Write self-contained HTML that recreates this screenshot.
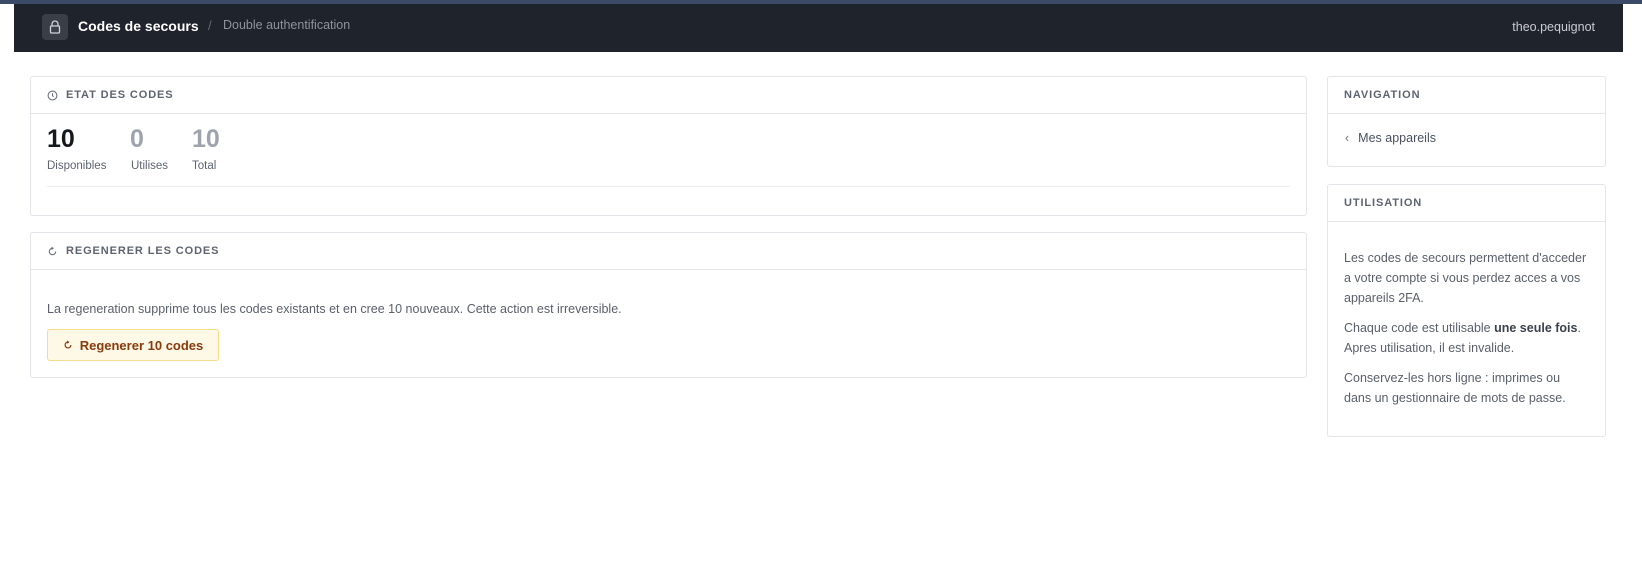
<!DOCTYPE html>
<html><head><meta charset="utf-8"><style>
*{box-sizing:border-box;margin:0;padding:0}
body{width:1642px;height:577px;background:#fff;font-family:"Liberation Sans",Arial,sans-serif;position:relative;overflow:hidden}
.topline{position:absolute;left:0;top:0;width:1642px;height:4px;background:#3b4a66}
.hdr{position:absolute;left:14px;top:4px;width:1609px;height:48px;background:#1f232b}
.lock{position:absolute;left:28px;top:10px;width:26px;height:26px;border-radius:4px;background:#3a3f47}
.title{position:absolute;left:64px;top:14px;color:#fff;font-weight:bold;font-size:14px}
.sep{position:absolute;left:194px;top:14px;color:#666b73;font-size:13px}
.crumb{position:absolute;left:209px;top:14px;color:#8e939b;font-size:12.5px}
.user{position:absolute;right:28px;top:16px;color:#c9ccd1;font-size:12.5px}
.card{position:absolute;border:1px solid #e3e5e8;border-radius:3px;background:#fff}
.ch{height:37px;border-bottom:1px solid #e3e5e8;padding:0 16px;display:flex;align-items:center;font-size:11px;font-weight:bold;letter-spacing:0.9px;color:#5e6470}
.ch svg{margin-right:8px}
.num{position:absolute;font-size:25px;font-weight:bold}
.lbl{position:absolute;font-size:11.5px;color:#5e6470}
.p{font-size:12.5px;color:#5a606b;line-height:20px}
</style></head><body>
<div class="topline"></div>
<div class="hdr">
 <div class="lock"><svg width="26" height="26" viewBox="0 0 26 26"><rect x="8.5" y="12" width="9" height="7" rx="1" fill="none" stroke="#d0d3d8" stroke-width="1.3"/><path d="M10 12V10a3 3 0 0 1 6 0v2" fill="none" stroke="#d0d3d8" stroke-width="1.3"/></svg></div>
 <div class="title">Codes de secours</div>
 <div class="sep">/</div>
 <div class="crumb">Double authentification</div>
 <div class="user">theo.pequignot</div>
</div>

<div class="card" style="left:30px;top:76px;width:1277px;height:140px">
 <div class="ch"><svg width="11" height="11" viewBox="0 0 12 12"><circle cx="6" cy="6" r="4.8" fill="none" stroke="#6b717c" stroke-width="1.2"/><path d="M6 3.5V6.3L7.3 7.3" fill="none" stroke="#6b717c" stroke-width="1.1"/></svg>ETAT DES CODES</div>
 <div class="num" style="left:16px;top:48px;color:#15181d">10</div>
 <div class="num" style="left:99px;top:48px;color:#9ea3ac">0</div>
 <div class="num" style="left:161px;top:48px;color:#9ea3ac">10</div>
 <div class="lbl" style="left:16px;top:83px">Disponibles</div>
 <div class="lbl" style="left:100px;top:83px">Utilises</div>
 <div class="lbl" style="left:161px;top:83px">Total</div>
 <div style="position:absolute;left:16px;right:16px;top:109px;height:1px;background:#eceef0"></div>
</div>

<div class="card" style="left:30px;top:232px;width:1277px;height:146px">
 <div class="ch"><svg width="11" height="11" viewBox="0 0 12 12"><path d="M9.5 6A3.5 3.5 0 1 1 6 2.5" fill="none" stroke="#6b717c" stroke-width="1.2"/><path d="M5 1.2L6.6 2.5 5 3.8" fill="none" stroke="#6b717c" stroke-width="1.1"/></svg>REGENERER LES CODES</div>
 <div class="p" style="position:absolute;left:16px;top:66px">La regeneration supprime tous les codes existants et en cree 10 nouveaux. Cette action est irreversible.</div>
 <div style="position:absolute;left:16px;top:96px;width:172px;height:32px;background:#fef9e6;border:1px solid #f5dd8a;border-radius:3px;display:flex;align-items:center;justify-content:center;color:#8a3a0c;font-weight:bold;font-size:13px;white-space:nowrap"><svg width="10" height="10" viewBox="0 0 12 12" style="margin-right:7px;flex:none"><path d="M9.5 6A3.5 3.5 0 1 1 6 2.5" fill="none" stroke="#8a3a0c" stroke-width="1.4"/><path d="M5 1.2L6.6 2.5 5 3.8" fill="none" stroke="#8a3a0c" stroke-width="1.3"/></svg>Regenerer 10 codes</div>
</div>

<div class="card" style="left:1327px;top:76px;width:279px;height:91px">
 <div class="ch">NAVIGATION</div>
 <div style="position:absolute;left:17px;top:54px;font-size:12.5px;color:#4a5160"><span style="color:#777;margin-right:9px">‹</span>Mes appareils</div>
</div>

<div class="card" style="left:1327px;top:184px;width:279px;height:253px">
 <div class="ch">UTILISATION</div>
 <div class="p" style="position:absolute;left:16px;top:63px;width:246px">
  <p>Les codes de secours permettent d'acceder a votre compte si vous perdez acces a vos appareils 2FA.</p>
  <p style="margin-top:10px">Chaque code est utilisable <b style="color:#3c424c">une seule fois</b>. Apres utilisation, il est invalide.</p>
  <p style="margin-top:10px">Conservez-les hors ligne : imprimes ou dans un gestionnaire de mots de passe.</p>
 </div>
</div>
</body></html>
